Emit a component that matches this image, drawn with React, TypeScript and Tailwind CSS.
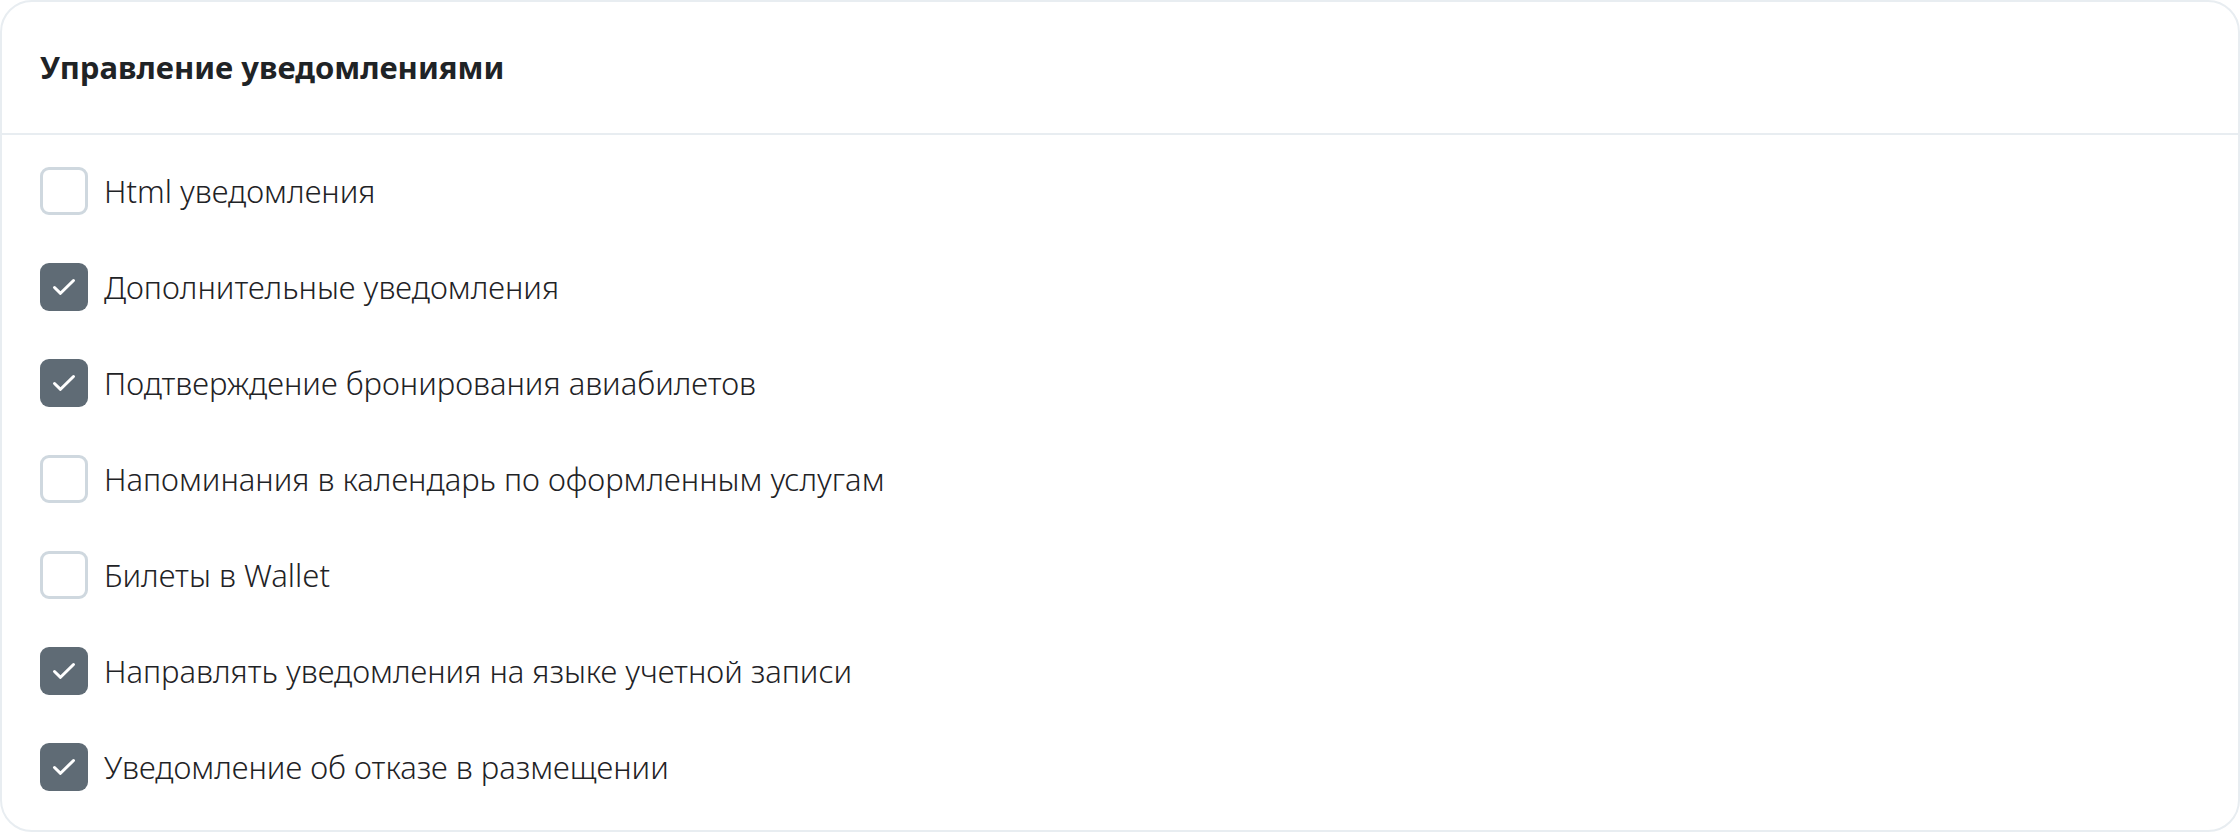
import React from 'react';

interface Option {
  label: string;
  checked: boolean;
}

const options: Option[] = [
  { label: 'Html уведомления', checked: false },
  { label: 'Дополнительные уведомления', checked: true },
  { label: 'Подтверждение бронирования авиабилетов', checked: true },
  { label: 'Напоминания в календарь по оформленным услугам', checked: false },
  { label: 'Билеты в Wallet', checked: false },
  { label: 'Направлять уведомления на языке учетной записи', checked: true },
  { label: 'Уведомление об отказе в размещении', checked: true },
];

const CheckIcon = () => (
  <svg className="w-[26px] h-[26px]" viewBox="0 0 26 26" fill="none">
    <path d="M3.5 13.5l6 5.8L22.5 6.5" stroke="white" strokeWidth="3" strokeLinecap="round" strokeLinejoin="round" />
  </svg>
);

const CheckRow: React.FC<{ opt: Option }> = ({ opt }) => (
  <label className="flex items-center gap-4 h-12 cursor-pointer">
    {opt.checked ? (
      <span className="w-12 h-12 rounded-[9px] bg-[#5f6b75] flex items-center justify-center shrink-0">
        <CheckIcon />
      </span>
    ) : (
      <span className="w-12 h-12 rounded-[9px] border-[3px] border-[#cfd8df] bg-white shrink-0"></span>
    )}
    <span className="text-[31px] font-light text-[#1f2326] leading-none">{opt.label}</span>
  </label>
);

export default function App() {
  return (
    <div className="w-[2240px] h-[832px] bg-white" style={{ fontFamily: '"Noto Sans", sans-serif' }}>
      <div className="h-full rounded-[32px] border-2 border-[#e8edf1] bg-white flex flex-col">
        <div className="h-[133px] border-b-2 border-[#e8edf1] flex items-center px-[38px]">
          <h1 className="text-[31px] font-bold text-[#1f2326] leading-none">Управление уведомлениями</h1>
        </div>
        <div className="flex flex-col gap-12 pt-8 px-[38px]">
          {options.map((o) => (
            <CheckRow key={o.label} opt={o} />
          ))}
        </div>
      </div>
    </div>
  );
}
